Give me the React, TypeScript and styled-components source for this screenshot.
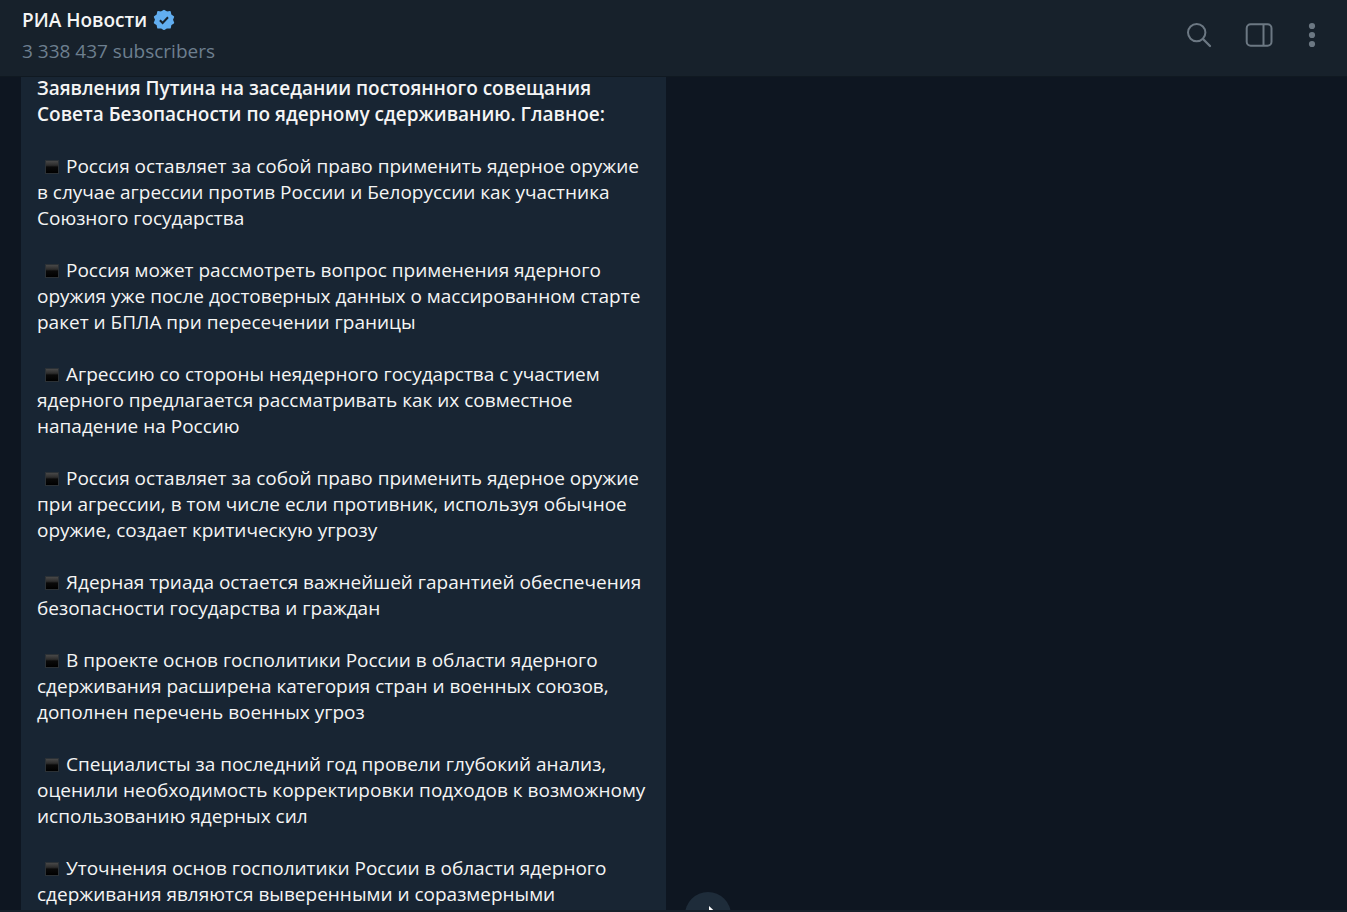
import React from "react";
import styled, { createGlobalStyle } from "styled-components";

const GlobalStyle = createGlobalStyle`
  *, *::before, *::after { box-sizing: border-box; }
  body {
    margin: 0;
    background: #0e1621;
    color: #f5f5f5;
    font-family: "Open Sans", "Noto Sans", sans-serif;
    font-size: 19px;
    line-height: 26px;
  }
`;

const Window = styled.div`
  display: flex;
  flex-direction: column;
  height: 100vh;
  overflow: hidden;
`;

const Header = styled.header`
  display: flex;
  justify-content: space-between;
  flex: none;
  padding: 7px 27px 12px 22px;
  background: #17212b;
  box-shadow: 0 1px 0 #101921;
  z-index: 1;
`;

const TitleRow = styled.div`
  display: flex;
  align-items: center;
  gap: 6px;
`;

const Title = styled.h1`
  margin: 0;
  font-size: 19px;
  font-weight: 600;
  line-height: 26px;
`;

const Subscribers = styled.p`
  margin: 5px 0 0;
  color: #6d7f8f;
`;

const Actions = styled.nav`
  display: flex;
  align-items: center;
  gap: 30px;
  padding-bottom: 1px;
`;

const IconButton = styled.button<{ $width: number }>`
  display: flex;
  justify-content: center;
  width: ${(p) => p.$width}px;
  padding: 0;
  border: 0;
  background: none;
  color: #6c7883;
  cursor: pointer;

  svg { flex: none; display: block; }
`;

const Feed = styled.main`
  display: flex;
  align-items: flex-start;
  flex: 1;
  min-height: 0;
  padding-left: 21px;
  overflow: hidden;
`;

const Message = styled.article`
  flex: none;
  width: 645px;
  margin-top: -1px;
  padding: 0 16px;
  background: #182533;
`;

const Paragraph = styled.p`
  margin: 0 0 26px;
  white-space: pre;
`;

const Headline = styled.h2`
  margin: 0 0 26px;
  font-size: 19px;
  font-weight: 600;
  line-height: 26px;
  white-space: pre;
`;

const Square = styled.span`
  display: inline-block;
  width: 14px;
  height: 14px;
  margin: 0 7px 0 8px;
  border: 1px solid #2b3136;
  background: linear-gradient(#484848, #2c2c2c 36%, #0a0a0a 50%, #000000);
  vertical-align: -1px;
`;

const ShareButton = styled.button`
  display: flex;
  align-items: center;
  justify-content: center;
  align-self: flex-end;
  flex: none;
  width: 46px;
  height: 46px;
  margin: 0 0 -28px 19px;
  padding: 0;
  border: 0;
  border-radius: 50%;
  background: #1e2c3a;
  color: #ffffff;
  cursor: pointer;
`;

const BottomBar = styled.footer`
  flex: none;
  height: 2px;
  background: #17212b;
  z-index: 1;
`;

const points = [
  "Россия оставляет за собой право применить ядерное оружие\nв случае агрессии против России и Белоруссии как участника\nСоюзного государства",
  "Россия может рассмотреть вопрос применения ядерного\nоружия уже после достоверных данных о массированном старте\nракет и БПЛА при пересечении границы",
  "Агрессию со стороны неядерного государства с участием\nядерного предлагается рассматривать как их совместное\nнападение на Россию",
  "Россия оставляет за собой право применить ядерное оружие\nпри агрессии, в том числе если противник, используя обычное\nоружие, создает критическую угрозу",
  "Ядерная триада остается важнейшей гарантией обеспечения\nбезопасности государства и граждан",
  "В проекте основ госполитики России в области ядерного\nсдерживания расширена категория стран и военных союзов,\nдополнен перечень военных угроз",
  "Специалисты за последний год провели глубокий анализ,\nоценили необходимость корректировки подходов к возможному\nиспользованию ядерных сил",
  "Уточнения основ госполитики России в области ядерного\nсдерживания являются выверенными и соразмерными",
];

const VerifiedBadge = () => (
  <svg width="22" height="22" viewBox="0 0 22 22" role="img" aria-label="Verified">
    <path
      d="M11 1.6 13.8 3.2 17 2.9 17.6 6 20.4 7.8 19.2 10.8 20.4 13.9 17.7 15.6 17 18.8 13.8 18.5 11 20.2 8.2 18.5 5 18.8 4.3 15.6 1.6 13.9 2.8 10.8 1.6 7.8 4.4 6 5 2.9 8.2 3.2Z"
      fill="#62aef0"
      stroke="#62aef0"
      strokeWidth="1.6"
      strokeLinejoin="round"
    />
    <path d="m6.9 11.3 2.7 2.7 5.4-5.7" fill="none" stroke="#17212b" strokeWidth="2" />
  </svg>
);

const SearchIcon = () => (
  <svg width="26" height="26" viewBox="0 0 26 26" fill="none" stroke="currentColor" strokeWidth="2" strokeLinecap="round">
    <circle cx="10.7" cy="10.6" r="8.7" />
    <path d="m17 17 7 7" strokeWidth="2.3" />
  </svg>
);

const PanelIcon = () => (
  <svg width="28" height="26" viewBox="0 0 28 26" fill="none" stroke="currentColor" strokeWidth="2">
    <rect x="1.7" y="2.2" width="24.8" height="21.6" rx="4" />
    <path d="M18.5 2.5v21.2" />
  </svg>
);

const MoreIcon = () => (
  <svg width="8" height="26" viewBox="0 0 8 26" fill="currentColor">
    <circle cx="4" cy="4" r="3.1" />
    <circle cx="4" cy="13" r="3.1" />
    <circle cx="4" cy="22" r="3.1" />
  </svg>
);

const ShareIcon = () => (
  <svg width="22" height="22" viewBox="0 0 22 22" fill="currentColor">
    <path d="M12 2v5C6 7 3 11 2 17c3-4 6-5 10-5v5l8-7.500Z" />
  </svg>
);

export default function App() {
  return (
    <Window>
      <GlobalStyle />
      <Header>
        <div>
          <TitleRow>
            <Title>РИА Новости</Title>
            <VerifiedBadge />
          </TitleRow>
          <Subscribers>3 338 437 subscribers</Subscribers>
        </div>
        <Actions aria-label="Channel actions">
          <IconButton $width={30} type="button" aria-label="Search"><SearchIcon /></IconButton>
          <IconButton $width={30} type="button" aria-label="Toggle side panel"><PanelIcon /></IconButton>
          <IconButton $width={16} type="button" aria-label="More"><MoreIcon /></IconButton>
        </Actions>
      </Header>
      <Feed>
        <Message>
          <Headline>{"Заявления Путина на заседании постоянного совещания\nСовета Безопасности по ядерному сдерживанию. Главное:"}</Headline>
          {points.map((text, i) => (
            <Paragraph key={i}><Square />{text}</Paragraph>
          ))}
        </Message>
        <ShareButton type="button" aria-label="Share"><ShareIcon /></ShareButton>
      </Feed>
      <BottomBar />
    </Window>
  );
}
